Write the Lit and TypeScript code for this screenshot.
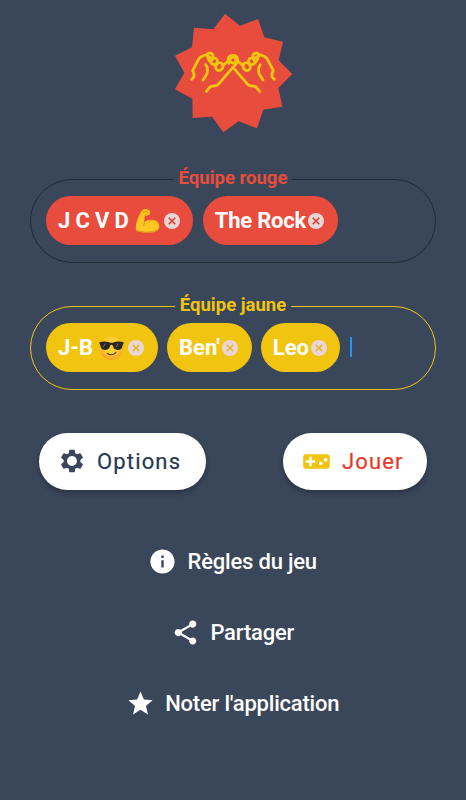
import { LitElement, html, css, svg, nothing } from "lit";
import { customElement, property } from "lit/decorators.js";

const flexedArm = html`<svg class="emoji" viewBox="0 0 24 24">
  <defs>
    <linearGradient id="skin" x1="0" y1="0" x2="0" y2="1">
      <stop offset="0" stop-color="#fbc11b" />
      <stop offset="1" stop-color="#ffc928" />
    </linearGradient>
  </defs>
  <path fill="url(#skin)" d="M7.600.6C9 0 10.800-.1 12 .6c1.800.3 2.700 1.500 2.700 2.900.1 1.700-.9 2.700-2.600 2.700-1.100 1.100-2.200.8-2.700.8-.3 2.200-.9 4.300-.5 6.500 1.700-2.200 4.200-2.800 6.600-2.700 5 .1 8.500 2.800 8.300 6.500-.2 4.300-4.400 6.300-10.200 6.300-4.700 0-9.300-.5-12.700-1.900C-.2 19.500.3 14.700 2 10.500 3.200 7.400 4.500 3.400 7.600.6z" />
  <path fill="none" stroke="#d79014" stroke-width="1" stroke-linecap="round" d="M8.900 13.800c-.5 1-.7 1.800-.5 3M17.500 10.900c-2 .1-3.400.9-4.300 1.900M9.500 6.600c1-.1 1.500-.5 1.700-1.300M8 3.300c1.300-.6 2.800-.5 4 .1M2 21.700c6 2 14 2 18.500-.3" />
</svg>`;

const sunglasses = html`<svg class="emoji" viewBox="0 0 24 24">
  <defs>
    <radialGradient id="face" cx="0.5" cy="0.4" r="0.62">
      <stop offset="0.5" stop-color="#fdd033" />
      <stop offset="0.8" stop-color="#fbb52a" />
      <stop offset="1" stop-color="#f08f33" />
    </radialGradient>
  </defs>
  <circle cx="12" cy="12" r="11.700" fill="url(#face)" />
  <path fill="#2b2520" d="M0 6.200c3.500-1 7.500-.9 10.200.3.800.3 2.800.3 3.600 0C16.500 5.300 20.500 5.200 24 6.200v1.900c-.6.3-.7.8-.9 1.700-.6 3-2.100 4.100-4.900 4.100-3.200 0-4.300-1.700-5-4.300-.3-1.100-2.100-1.100-2.400 0-.7 2.600-1.800 4.300-5 4.300-2.800 0-4.300-1.100-4.900-4.100C.7 8.900.6 8.400 0 8.100z" />
  <path fill="none" stroke="#82796c" stroke-width="1" d="M3.500 11l2.500-3.500M16.500 11L19 7.500" />
  <path fill="none" stroke="#5d3d20" stroke-width="1.400" stroke-linecap="round" d="M8 17.500c2.500 1.800 6 1.500 8.200-.9" />
</svg>`;

const removeIcon = html`<svg class="remove" viewBox="0 0 16 16">
  <circle cx="8" cy="8" r="8" fill="#ead6d6" />
  <path fill="none" stroke="currentColor" stroke-width="1.400" d="M4.700 4.700l6.600 6.600M11.300 4.700l-6.600 6.600" />
</svg>`;

const icons = {
  gear: svg`<path d="M19.140 12.940c.04-.3.06-.61.06-.94 0-.32-.02-.64-.07-.94l2.030-1.580c.18-.14.23-.41.12-.61l-1.920-3.320c-.12-.22-.37-.29-.59-.22l-2.390.96c-.5-.38-1.030-.7-1.620-.94l-.36-2.540c-.04-.24-.24-.41-.48-.41h-3.840c-.24 0-.43.17-.47.41l-.36 2.540c-.59.24-1.130.57-1.620.94l-2.390-.96c-.22-.08-.47 0-.59.22L2.740 8.870c-.12.21-.08.47.12.61l2.030 1.580c-.05.3-.09.63-.09.94s.02.64.07.94l-2.030 1.580c-.18.14-.23.41-.12.61l1.920 3.320c.12.22.37.29.59.22l2.390-.96c.5.38 1.030.7 1.620.94l.36 2.540c.05.24.24.41.48.41h3.840c.24 0 .44-.17.47-.41l.36-2.540c.59-.24 1.130-.56 1.620-.94l2.390.96c.22.08.47 0 .59-.22l1.920-3.320c.12-.22.07-.47-.12-.61l-2.010-1.580zM12 16.200c-2.320 0-4.200-1.880-4.200-4.200s1.880-4.200 4.200-4.200 4.200 1.880 4.200 4.200-1.880 4.200-4.200 4.200z"/>`,
  gamepad: svg`<path d="M21 6H3c-1.100 0-2 .9-2 2v8c0 1.100.9 2 2 2h18c1.100 0 2-.9 2-2V8c0-1.100-.9-2-2-2zm-10 7H8v3H6v-3H3v-2h3V8h2v3h3v2zm4.500 2c-.83 0-1.500-.67-1.500-1.500s.67-1.500 1.500-1.500 1.500.67 1.500 1.500-.67 1.500-1.500 1.500zm4-3c-.83 0-1.500-.67-1.500-1.500S18.670 9 19.500 9s1.500.67 1.500 1.500-.67 1.500-1.500 1.500z"/>`,
  info: svg`<path d="M12 2C6.480 2 2 6.480 2 12s4.480 10 10 10 10-4.480 10-10S17.520 2 12 2zm1 15h-2v-6h2v6zm0-8h-2V7h2v2z"/>`,
  share: svg`<path d="M18 16.080c-.76 0-1.440.3-1.960.77L8.910 12.700c.05-.23.09-.46.09-.7s-.04-.47-.09-.7l7.050-4.110c.54.5 1.250.81 2.040.81 1.660 0 3-1.340 3-3s-1.340-3-3-3-3 1.340-3 3c0 .24.04.47.09.7L8.040 9.810C7.500 9.310 6.790 9 6 9c-1.660 0-3 1.340-3 3s1.340 3 3 3c.79 0 1.500-.31 2.040-.81l7.120 4.160c-.05.21-.08.43-.08.65 0 1.610 1.310 2.920 2.920 2.920s2.920-1.310 2.920-2.920-1.310-2.920-2.920-2.920z"/>`,
  star: svg`<path d="M12 17.270L18.180 21l-1.640-7.030L22 9.240l-7.190-.61L12 2 9.190 8.630 2 9.240l5.460 4.730L5.820 21z"/>`,
};

const hand = svg`
  <path d="M71 214L78 206V197L74 188L89 159Q94 147 104 144L120 138" />
  <path d="M105 216L117 197Q121 180 113 170" />
  <ellipse cx="127" cy="142" rx="8.500" ry="6.500" transform="rotate(25 127 142)" />
  <path d="M119 145Q121 158 131 165" />
  <ellipse cx="139" cy="160" rx="8.500" ry="10" transform="rotate(35 139 160)" />
  <ellipse cx="154" cy="176" rx="10.500" ry="12" transform="rotate(35 154 176)" />
  <path d="M164 173L180 160" />
  <path d="M115 250L127 236L147 232Q151 230 156 223L195 178" />`;

interface Player {
  name: string;
  emoji?: unknown;
  spacing: number;
}

@customElement("team-field")
class TeamField extends LitElement {
  @property() label = "";
  @property() color = "red";
  @property({ attribute: false }) players: Player[] = [];
  @property({ type: Boolean }) focused = false;

  static styles = css`
    :host { display: block; }
    .field {
      box-sizing: border-box; width: 406px; height: 96px; margin: 0; padding: 5px 15px 0;
      border: 1px solid #202b38; border-radius: 42px; min-width: 0;
    }
    .field.yellow { border-color: #f1c40f; }
    .legend {
      height: 22px; line-height: 22px; margin: 0 auto; padding: 0 4.500px 2px;
      font-size: 18.500px; font-weight: 700; color: #e84c3d; white-space: nowrap;
    }
    .yellow .legend { color: #f1c40f; }
    .chips { display: flex; align-items: center; gap: 9.300px; }
    .chip {
      box-sizing: border-box; display: flex; align-items: center; height: 49px; padding: 0 13.500px 0 12px;
      border-radius: 25px; background: #e84c3d; color: #fff; font-size: 22px; font-weight: 700; white-space: nowrap;
    }
    .yellow .chip { background: #f1c40f; }
    .emoji { width: 25px; height: 24px; margin-left: 6px; margin-right: 2px; }
    .remove { width: 16px; height: 16px; margin-left: 2.200px; color: #d9342b; flex: none; }
    .yellow .remove { color: #e3b51b; }
    .caret { width: 2.500px; height: 20px; margin-bottom: 2px; background: #2196f3; }
  `;

  render() {
    return html`<fieldset class="field ${this.color}">
      <legend class="legend">${this.label}</legend>
      <div class="chips">
        ${this.players.map((p) => html`<div class="chip"><span style="letter-spacing:${p.spacing}px">${p.name}</span>${p.emoji ?? nothing}${removeIcon}</div>`)}
        ${this.focused ? html`<span class="caret"></span>` : nothing}
      </div>
    </fieldset>`;
  }
}

@customElement("app-root")
class AppRoot extends LitElement {
  static styles = css`
    :host {
      display: flex; flex-direction: column; align-items: center; box-sizing: border-box;
      width: 466px; height: 800px; padding-top: 8px; overflow: hidden;
      background: #3a4659; font-family: Roboto, sans-serif;
    }
    .logo { width: 130px; height: 130px; display: block; flex: none; }
    .red-team { margin-top: 29px; }
    .yellow-team { margin-top: 31px; }
    .buttons { display: flex; justify-content: space-between; box-sizing: border-box; width: 388px; margin-top: 42.500px; }
    .button {
      display: flex; align-items: center; box-sizing: border-box; height: 57px; border: 0; border-radius: 29px;
      background: #fff; font: 400 22px Roboto, sans-serif; letter-spacing: 1.150px; color: #263850;
      -webkit-text-stroke: 0.2px currentColor;
      box-shadow: 0 3px 5px rgba(17, 26, 42, 0.4); padding: 0 0 0 19px; gap: 11px;
    }
    .options { width: 167px; }
    .play { width: 144px; color: #e9382b; }
    .icon { width: 28px; height: 28px; fill: #3a4659; flex: none; }
    .play .icon { fill: #f1c40f; width: 29px; height: 29px; }
    .links { display: flex; flex-direction: column; align-items: center; gap: 41px; margin-top: 56.500px; }
    .link { display: flex; align-items: center; height: 30px; gap: 10.500px; margin-right: 1px; color: #fff; font-size: 22px; letter-spacing: -0.200px; font-weight: 500; white-space: nowrap; }
    .link .icon { fill: #fff; width: 29px; height: 29px; }
  `;

  link(icon: unknown, text: string) {
    return html`<div class="link"><svg class="icon" viewBox="0 0 24 24">${icon}</svg><span>${text}</span></div>`;
  }

  render() {
    return html`
      <svg class="logo" viewBox="0 0 390 390">
        <path fill="#e84c3d" d="M171 17L216 53L270 33L289 88L345 101L332 157L373 198L331 240L343 296L286 305L267 361L212 340L166 373L132 326L74 330L73 272L21 244L49 194L21 143L72 118L78 59L136 64Z" />
        <g fill="none" stroke="#f1c40f" stroke-width="8.500" stroke-linecap="round" stroke-linejoin="round">
          <g>${hand}</g>
          <g transform="translate(390 0) scale(-1 1)">${hand}</g>
          <path d="M183 166Q175 143 195 142Q215 143 206 166L195 178" />
          <circle cx="195" cy="156" r="9" />
        </g>
      </svg>
      <team-field class="red-team" label="Équipe rouge" .players=${[
        { name: "J C V D", emoji: flexedArm, spacing: -0.15 },
        { name: "The Rock", spacing: -0.2 },
      ]}></team-field>
      <team-field class="yellow-team" label="Équipe jaune" color="yellow" focused .players=${[
        { name: "J-B", emoji: sunglasses, spacing: 0 },
        { name: "Ben'", spacing: 0 },
        { name: "Leo", spacing: -0.1 },
      ]}></team-field>
      <div class="buttons">
        <button class="button options"><svg class="icon" viewBox="0 0 24 24">${icons.gear}</svg>Options</button>
        <button class="button play"><svg class="icon" viewBox="0 0 24 24">${icons.gamepad}</svg>Jouer</button>
      </div>
      <div class="links">
        ${this.link(icons.info, "Règles du jeu")}
        ${this.link(icons.share, "Partager")}
        ${this.link(icons.star, "Noter l'application")}
      </div>
    `;
  }
}
